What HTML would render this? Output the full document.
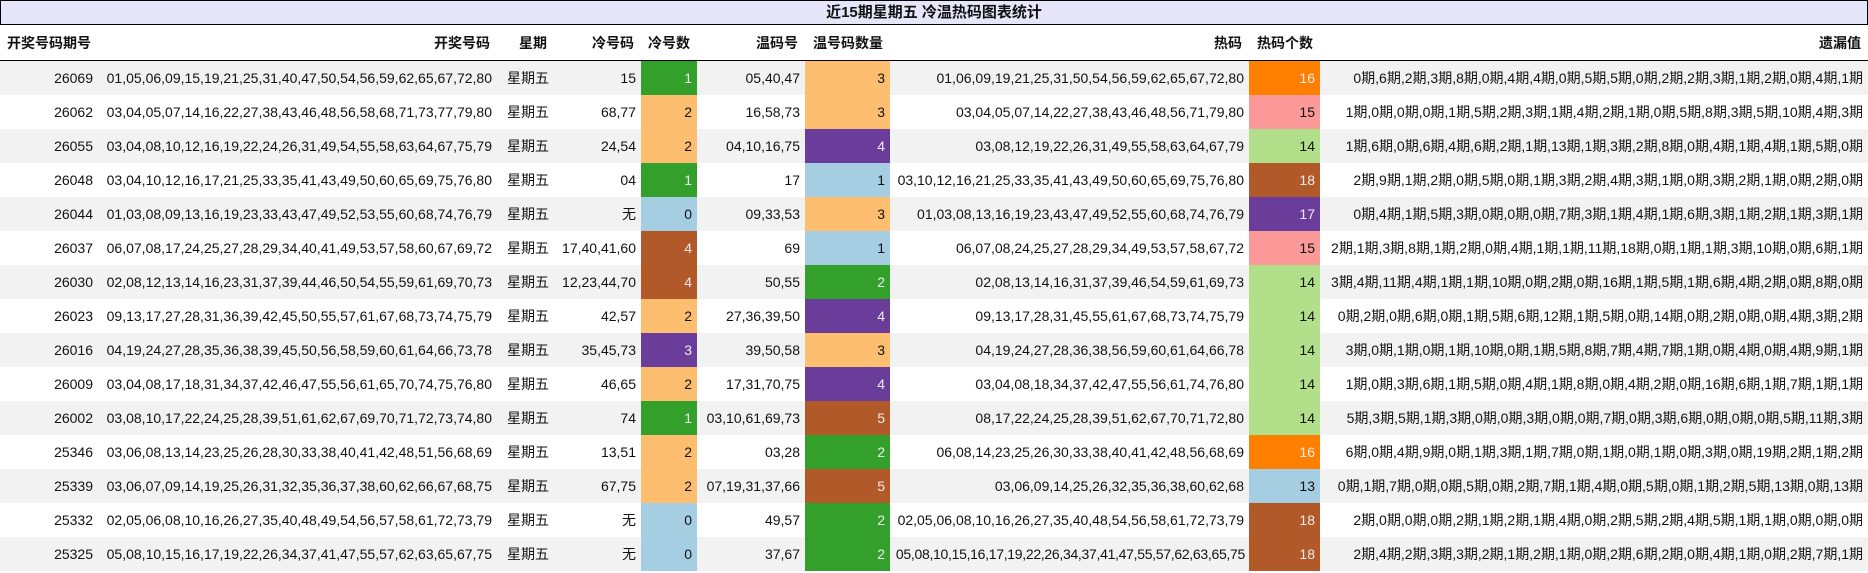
<!DOCTYPE html>
<html><head><meta charset="utf-8"><style>
body{margin:0;width:1868px;height:573px;overflow:hidden;background:#fff;font-family:"Liberation Sans","Noto Sans CJK SC",sans-serif;font-size:14px;color:#111}
.title{height:23px;border:1px solid #000;background:#e6e6fa;text-align:center;font-weight:bold;font-size:15px;line-height:23px}
table{border-collapse:collapse;table-layout:fixed;width:1868px}
th{height:35px;font-weight:bold;text-align:right;padding:0 7px;border-bottom:1px solid #000;white-space:nowrap}
td{height:34px;padding:0 5px;text-align:right;white-space:nowrap;overflow:visible}
tr.o td{background:#f2f2f2}
.g{background:#33a02c!important;color:#eee}
.lo{background:#fdbf6f!important}
.p{background:#6a3d9a!important;color:#eee}
.lb{background:#a6cee3!important}
.b{background:#b15928!important;color:#eee}
.or{background:#ff7f00!important;color:#eee}
.pk{background:#fb9a99!important}
.lg{background:#b2df8a!important}
.tight{letter-spacing:-0.3px;padding-right:4px}
</style></head><body>
<div class="title">近15期星期五 冷温热码图表统计</div>
<table>
<colgroup><col style="width:98px"><col style="width:399px"><col style="width:57px"><col style="width:87px"><col style="width:56px"><col style="width:108px"><col style="width:85px"><col style="width:359px"><col style="width:71px"><col style="width:548px"></colgroup>
<tr><th style="text-align:left">开奖号码期号</th><th>开奖号码</th><th>星期</th><th>冷号码</th><th>冷号数</th><th>温码号</th><th>温号码数量</th><th>热码</th><th>热码个数</th><th>遗漏值</th></tr>
<tr class="o"><td>26069</td><td>01,05,06,09,15,19,21,25,31,40,47,50,54,56,59,62,65,67,72,80</td><td>星期五</td><td>15</td><td class="g">1</td><td>05,40,47</td><td class="lo">3</td><td>01,06,09,19,21,25,31,50,54,56,59,62,65,67,72,80</td><td class="or">16</td><td>0期,6期,2期,3期,8期,0期,4期,4期,0期,5期,5期,0期,2期,2期,3期,1期,2期,0期,4期,1期</td></tr>
<tr><td>26062</td><td>03,04,05,07,14,16,22,27,38,43,46,48,56,58,68,71,73,77,79,80</td><td>星期五</td><td>68,77</td><td class="lo">2</td><td>16,58,73</td><td class="lo">3</td><td>03,04,05,07,14,22,27,38,43,46,48,56,71,79,80</td><td class="pk">15</td><td>1期,0期,0期,0期,1期,5期,2期,3期,1期,4期,2期,1期,0期,5期,8期,3期,5期,10期,4期,3期</td></tr>
<tr class="o"><td>26055</td><td>03,04,08,10,12,16,19,22,24,26,31,49,54,55,58,63,64,67,75,79</td><td>星期五</td><td>24,54</td><td class="lo">2</td><td>04,10,16,75</td><td class="p">4</td><td>03,08,12,19,22,26,31,49,55,58,63,64,67,79</td><td class="lg">14</td><td>1期,6期,0期,6期,4期,6期,2期,1期,13期,1期,3期,2期,8期,0期,4期,1期,4期,1期,5期,0期</td></tr>
<tr><td>26048</td><td>03,04,10,12,16,17,21,25,33,35,41,43,49,50,60,65,69,75,76,80</td><td>星期五</td><td>04</td><td class="g">1</td><td>17</td><td class="lb">1</td><td>03,10,12,16,21,25,33,35,41,43,49,50,60,65,69,75,76,80</td><td class="b">18</td><td>2期,9期,1期,2期,0期,5期,0期,1期,3期,2期,4期,3期,1期,0期,3期,2期,1期,0期,2期,0期</td></tr>
<tr class="o"><td>26044</td><td>01,03,08,09,13,16,19,23,33,43,47,49,52,53,55,60,68,74,76,79</td><td>星期五</td><td>无</td><td class="lb">0</td><td>09,33,53</td><td class="lo">3</td><td>01,03,08,13,16,19,23,43,47,49,52,55,60,68,74,76,79</td><td class="p">17</td><td>0期,4期,1期,5期,3期,0期,0期,0期,7期,3期,1期,4期,1期,6期,3期,1期,2期,1期,3期,1期</td></tr>
<tr><td>26037</td><td>06,07,08,17,24,25,27,28,29,34,40,41,49,53,57,58,60,67,69,72</td><td>星期五</td><td>17,40,41,60</td><td class="b">4</td><td>69</td><td class="lb">1</td><td>06,07,08,24,25,27,28,29,34,49,53,57,58,67,72</td><td class="pk">15</td><td>2期,1期,3期,8期,1期,2期,0期,4期,1期,1期,11期,18期,0期,1期,1期,3期,10期,0期,6期,1期</td></tr>
<tr class="o"><td>26030</td><td>02,08,12,13,14,16,23,31,37,39,44,46,50,54,55,59,61,69,70,73</td><td>星期五</td><td>12,23,44,70</td><td class="b">4</td><td>50,55</td><td class="g">2</td><td>02,08,13,14,16,31,37,39,46,54,59,61,69,73</td><td class="lg">14</td><td>3期,4期,11期,4期,1期,1期,10期,0期,2期,0期,16期,1期,5期,1期,6期,4期,2期,0期,8期,0期</td></tr>
<tr><td>26023</td><td>09,13,17,27,28,31,36,39,42,45,50,55,57,61,67,68,73,74,75,79</td><td>星期五</td><td>42,57</td><td class="lo">2</td><td>27,36,39,50</td><td class="p">4</td><td>09,13,17,28,31,45,55,61,67,68,73,74,75,79</td><td class="lg">14</td><td>0期,2期,0期,6期,0期,1期,5期,6期,12期,1期,5期,0期,14期,0期,2期,0期,0期,4期,3期,2期</td></tr>
<tr class="o"><td>26016</td><td>04,19,24,27,28,35,36,38,39,45,50,56,58,59,60,61,64,66,73,78</td><td>星期五</td><td>35,45,73</td><td class="p">3</td><td>39,50,58</td><td class="lo">3</td><td>04,19,24,27,28,36,38,56,59,60,61,64,66,78</td><td class="lg">14</td><td>3期,0期,1期,0期,1期,10期,0期,1期,5期,8期,7期,4期,7期,1期,0期,4期,0期,4期,9期,1期</td></tr>
<tr><td>26009</td><td>03,04,08,17,18,31,34,37,42,46,47,55,56,61,65,70,74,75,76,80</td><td>星期五</td><td>46,65</td><td class="lo">2</td><td>17,31,70,75</td><td class="p">4</td><td>03,04,08,18,34,37,42,47,55,56,61,74,76,80</td><td class="lg">14</td><td>1期,0期,3期,6期,1期,5期,0期,4期,1期,8期,0期,4期,2期,0期,16期,6期,1期,7期,1期,1期</td></tr>
<tr class="o"><td>26002</td><td>03,08,10,17,22,24,25,28,39,51,61,62,67,69,70,71,72,73,74,80</td><td>星期五</td><td>74</td><td class="g">1</td><td>03,10,61,69,73</td><td class="b">5</td><td>08,17,22,24,25,28,39,51,62,67,70,71,72,80</td><td class="lg">14</td><td>5期,3期,5期,1期,3期,0期,0期,3期,0期,0期,7期,0期,3期,6期,0期,0期,0期,5期,11期,3期</td></tr>
<tr><td>25346</td><td>03,06,08,13,14,23,25,26,28,30,33,38,40,41,42,48,51,56,68,69</td><td>星期五</td><td>13,51</td><td class="lo">2</td><td>03,28</td><td class="g">2</td><td>06,08,14,23,25,26,30,33,38,40,41,42,48,56,68,69</td><td class="or">16</td><td>6期,0期,4期,9期,0期,1期,3期,1期,7期,0期,1期,0期,1期,0期,3期,0期,19期,2期,1期,2期</td></tr>
<tr class="o"><td>25339</td><td>03,06,07,09,14,19,25,26,31,32,35,36,37,38,60,62,66,67,68,75</td><td>星期五</td><td>67,75</td><td class="lo">2</td><td>07,19,31,37,66</td><td class="b">5</td><td>03,06,09,14,25,26,32,35,36,38,60,62,68</td><td class="lb">13</td><td>0期,1期,7期,0期,0期,5期,0期,2期,7期,1期,4期,0期,5期,0期,1期,2期,5期,13期,0期,13期</td></tr>
<tr><td>25332</td><td>02,05,06,08,10,16,26,27,35,40,48,49,54,56,57,58,61,72,73,79</td><td>星期五</td><td>无</td><td class="lb">0</td><td>49,57</td><td class="g">2</td><td>02,05,06,08,10,16,26,27,35,40,48,54,56,58,61,72,73,79</td><td class="b">18</td><td>2期,0期,0期,0期,2期,1期,2期,1期,4期,0期,2期,5期,2期,4期,5期,1期,1期,0期,0期,0期</td></tr>
<tr class="o"><td>25325</td><td>05,08,10,15,16,17,19,22,26,34,37,41,47,55,57,62,63,65,67,75</td><td>星期五</td><td>无</td><td class="lb">0</td><td>37,67</td><td class="g">2</td><td class="tight">05,08,10,15,16,17,19,22,26,34,37,41,47,55,57,62,63,65,75</td><td class="b">18</td><td>2期,4期,2期,3期,3期,2期,1期,2期,1期,0期,2期,6期,2期,0期,4期,1期,0期,2期,7期,1期</td></tr>
</table>
</body></html>
